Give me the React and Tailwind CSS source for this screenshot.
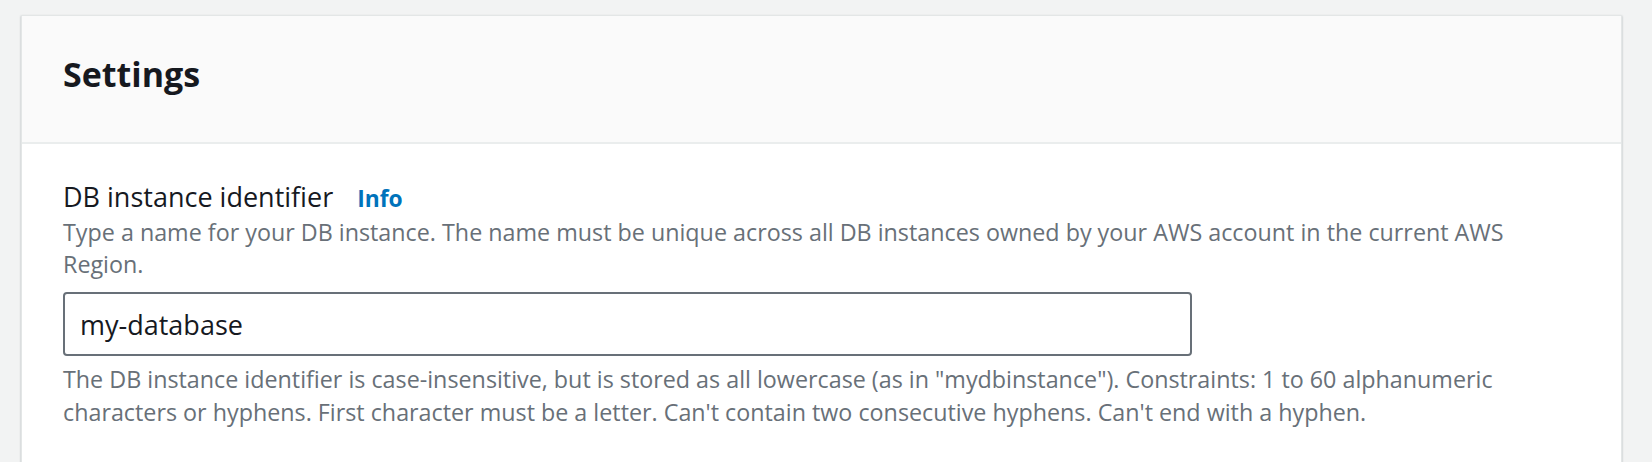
export default function App() {
  return (
    <div className="min-h-[462px] bg-[#f2f3f3] pl-[21px] pr-[30px] pt-[15px] font-['Open_Sans',sans-serif]">
      <div className="h-[480px] border border-[#e3e6e6] bg-white shadow-[0_1px_2px_rgba(0,28,36,0.3)]">
        <div className="h-[128px] border-b-2 border-[#eaeded] bg-[#fafafa] pl-[41px] pt-[36px]">
          <h2 className="text-[34px] font-bold leading-[44px] text-[#16191f]">Settings</h2>
        </div>
        <div className="pl-[41px] pr-[40px] pt-[36px]">
          <div className="flex items-baseline gap-[24px]">
            <label className="text-[27px] leading-[34px] text-[#16191f]">DB instance identifier</label>
            <a className="text-[22.8px] font-bold leading-[34px] text-[#0073bb]">Info</a>
          </div>
          <p className="max-w-[1480px] text-[23.3px] leading-[32px] text-[#687078]">
            Type a name for your DB instance. The name must be unique across all DB instances owned by your AWS account in the current AWS Region.
          </p>
          <input
            className="mt-[12px] h-[64px] w-[1129px] rounded-[4px] border-2 border-[#687078] px-[15px] text-[27px] text-[#16191f] outline-none"
            defaultValue="my-database"
          />
          <p className="mt-[7px] max-w-[1480px] text-[23.3px] leading-[33px] text-[#687078]">
            The DB instance identifier is case-insensitive, but is stored as all lowercase (as in "mydbinstance"). Constraints: 1 to 60 alphanumeric characters or hyphens. First character must be a letter. Can't contain two consecutive hyphens. Can't end with a hyphen.
          </p>
        </div>
      </div>
    </div>
  );
}
